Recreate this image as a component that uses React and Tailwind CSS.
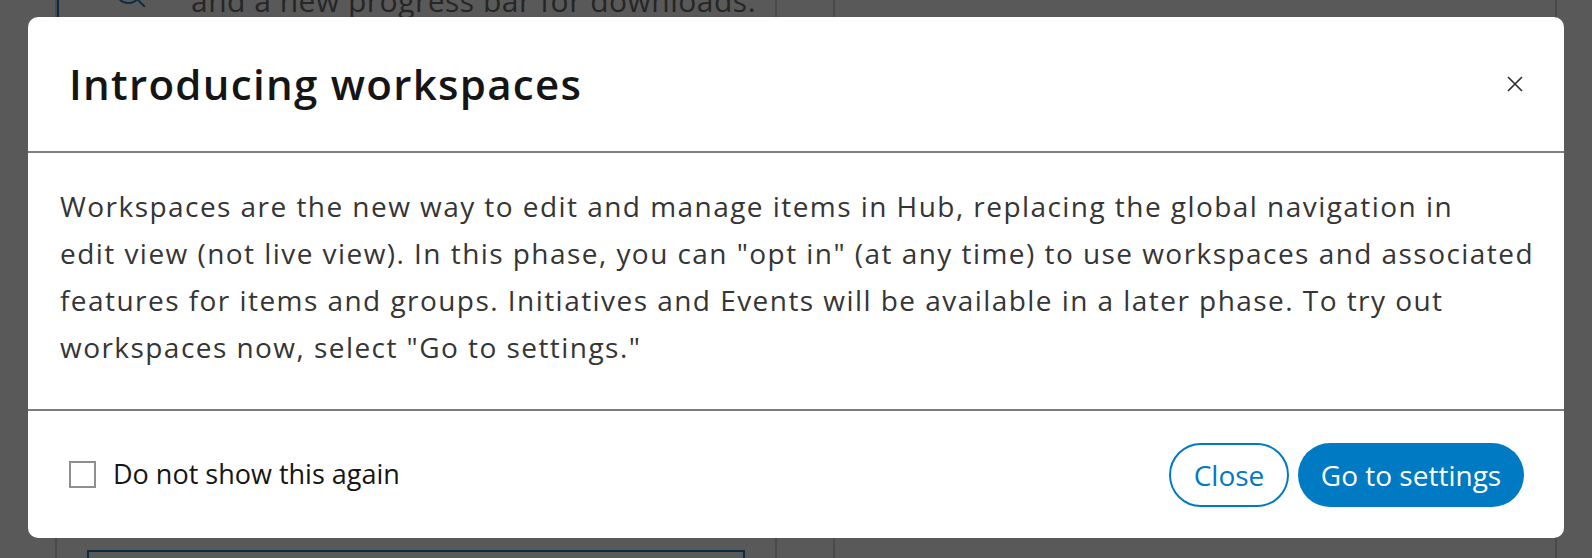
import { Search } from 'lucide-react'

const lines = [
  'Workspaces are the new way to edit and manage items in Hub, replacing the global navigation in',
  'edit view (not live view). In this phase, you can "opt in" (at any time) to use workspaces and associated',
  'features for items and groups. Initiatives and Events will be available in a later phase. To try out',
  'workspaces now, select "Go to settings."',
]

export default function App() {
  return (
    <div className="relative h-[558px] w-[1592px] overflow-hidden bg-[#595959] font-['Open_Sans','Noto_Sans',sans-serif]">
      {/* page behind the scrim */}
      <div className="flex h-full pl-[55px]">
        <div className="flex w-[722px] flex-col border-x-2 border-[#4a4a4a]">
          <div className="-mt-[17px] flex h-[34px] items-center border-l-2 border-[#0b2c44] pl-[52px]">
            <Search className="h-[38px] w-[38px] shrink-0 -translate-y-[8px] text-[#0b2c44]" strokeWidth={1.2} />
            <span className="ml-[42px] whitespace-nowrap text-[30px] tracking-[0.5px] text-[#262626]">and a new progress bar for downloads.</span>
          </div>
          <div className="mx-[30px] mt-auto h-[8px] border-2 border-b-0 border-[#0b2b42]" />
        </div>
        <div className="w-[58px] border-r-2 border-[#4a4a4a]" />
        <div className="w-[722px] border-r-2 border-[#4a4a4a]" />
      </div>

      {/* modal */}
      <div className="absolute left-[28px] top-[17px] flex w-[1536px] flex-col overflow-hidden rounded-[10px] bg-white">
        <div className="flex h-[134px] items-center justify-between pl-[41px] pr-[41px]">
          <h2 className="text-[42px] font-semibold leading-none tracking-[1.3px] text-[#151515]">Introducing workspaces</h2>
          <button className="flex h-[16px] w-[16px] items-center justify-center text-[#2b2b2b]">
            <svg viewBox="0 0 16 16" className="h-[16px] w-[16px]" fill="none" stroke="currentColor" strokeWidth="1.6">
              <path d="M1 1l14 14M15 1L1 15" />
            </svg>
          </button>
        </div>
        <div className="h-[2px] bg-[#7d7d7d]" />
        <div className="h-[256px] px-[32px] pt-[30px] text-[28px] leading-[47px] tracking-[1.45px] text-[#353535]">
          {lines.map((l) => (
            <p key={l} className="whitespace-nowrap">{l}</p>
          ))}
        </div>
        <div className="h-[2px] bg-[#7d7d7d]" />
        <div className="flex h-[127px] items-center justify-between pl-[41px] pr-[40px]">
          <label className="flex items-center gap-[17px] text-[27px] text-[#151515]">
            <span className="h-[27px] w-[27px] border-2 border-[#8f8f8f] bg-white" />
            Do not show this again
          </label>
          <div className="flex items-center gap-[9px]">
            <button className="flex h-[64px] w-[120px] items-center justify-center rounded-full border-2 border-[#007ac2] text-[28px] text-[#007ac2]">
              Close
            </button>
            <button className="flex h-[64px] w-[226px] items-center justify-center rounded-full bg-[#007ac2] text-[28px] text-white">
              Go to settings
            </button>
          </div>
        </div>
      </div>
    </div>
  )
}
